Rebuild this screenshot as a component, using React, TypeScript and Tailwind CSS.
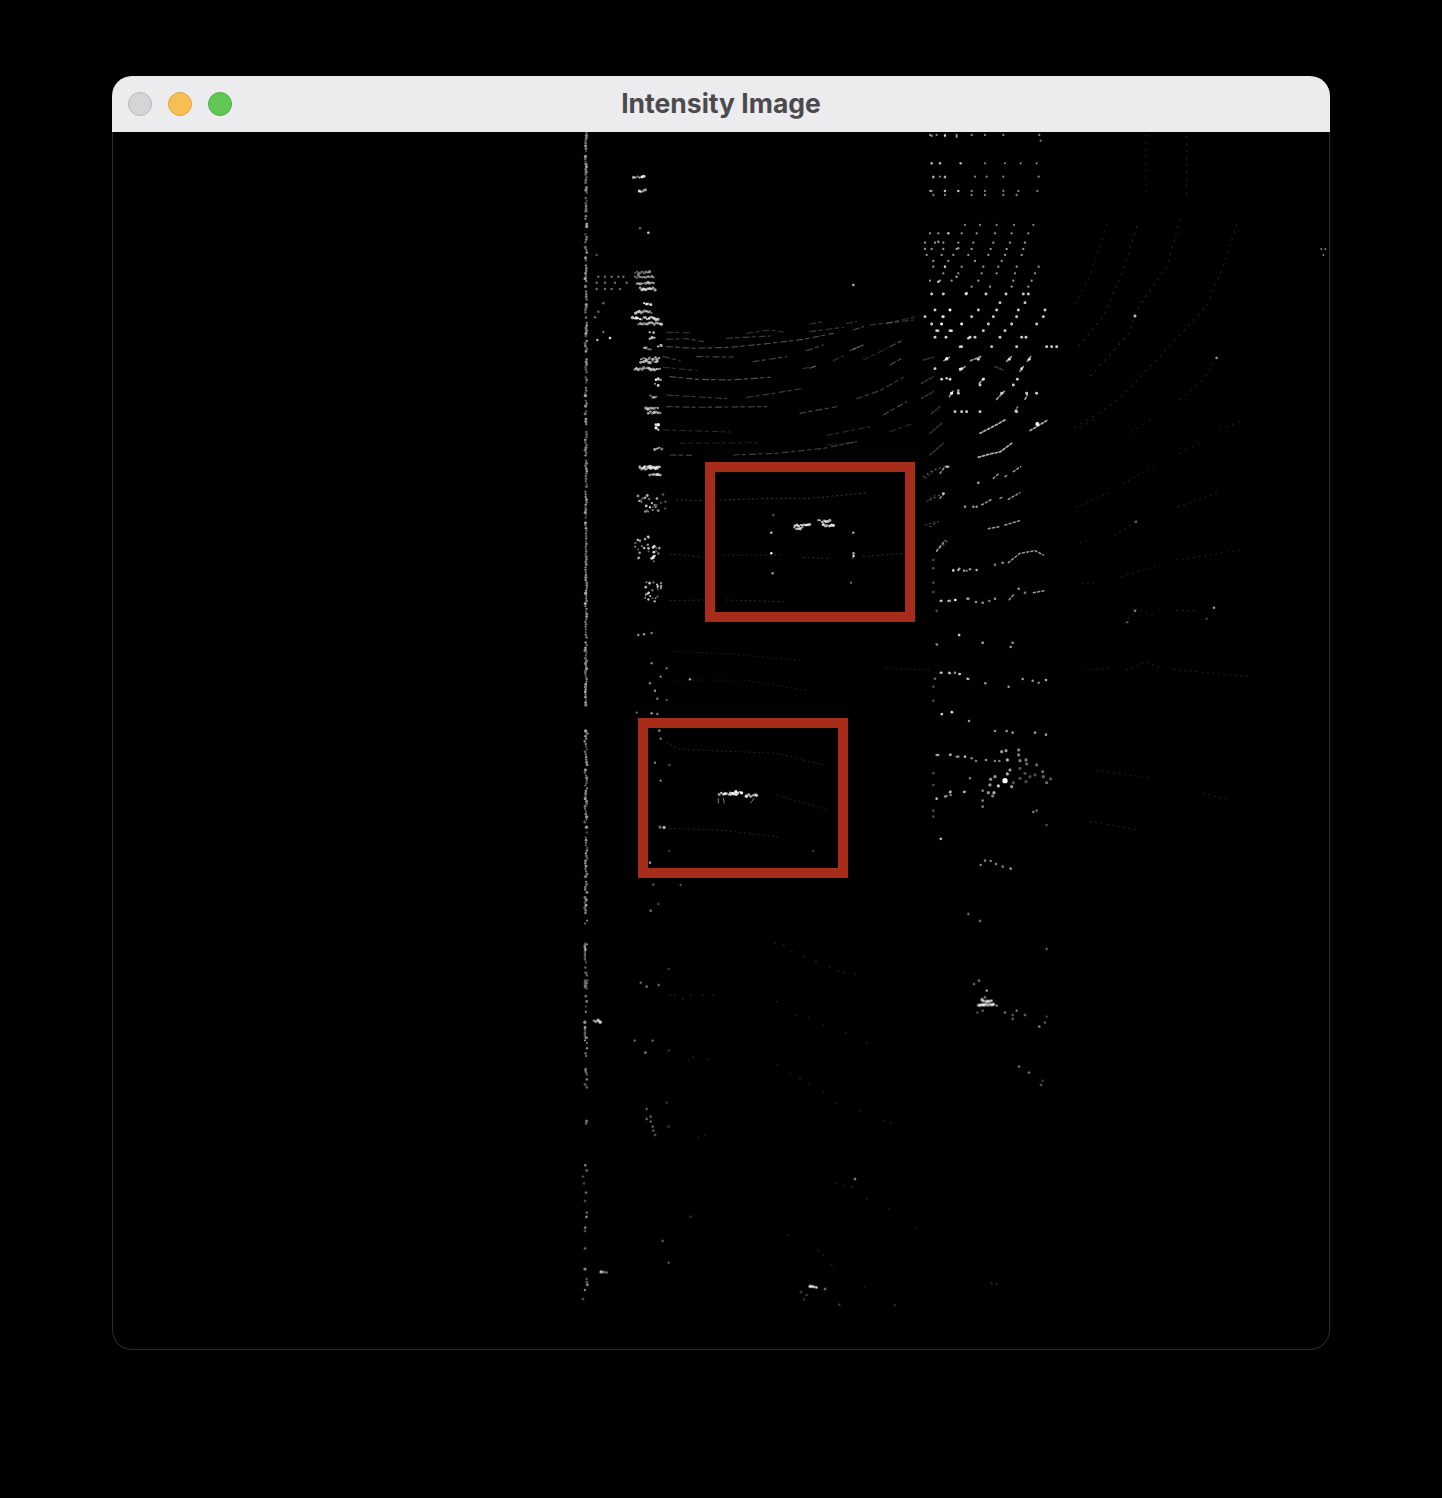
type Row = [number, number[]];
type Blob = [number, number, number, number];
type Arc = [number, string];

// seeded random so the point cloud stays the same between renders
const rand = (() => {
  let s = 1337;
  return () => {
    s = (s * 16807) % 2147483647;
    return s / 2147483647;
  };
})();

// the wall on the left, runs nearly the whole height
const wallDots: { x: number; y: number; r: number; o: number }[] = [];
for (let y = 133; y < 1300; y += 2.6) {
  const gap = (y > 706 && y < 730) || (y > 925 && y < 942);
  if (gap) continue;
  const keep = y < 450 ? 0.78 : y < 720 ? 0.95 : y < 925 ? 0.85 : y < 1085 ? 0.5 : 0.14;
  if (rand() > keep) continue;
  wallDots.push({
    x: 586 + (rand() - 0.5) * (y < 720 ? 1.6 : 2.6),
    y,
    r: 1 + rand() * 0.7,
    o: 0.3 + rand() * 0.35,
  });
}

// a blob of returns is a short row of bumpy dots, not a clean line
const speckle = (blobs: Blob[]) =>
  blobs.flatMap(([x, y, len, o]) =>
    Array.from({ length: Math.max(2, Math.round(len / 5)) }, (_, i) => ({
      x: x + (i * len) / Math.max(1, Math.round(len / 5) - 1) + (rand() - 0.5) * 2,
      y: y + (rand() - 0.5) * 7,
      r: 2.8 + rand() * 2.4,
      o: o * (0.6 + rand() * 0.4),
    })),
  );

// messy clump, for the trunks between the two boxes
const clump = (cx: number, cy: number, w: number, h: number, n: number) =>
  Array.from({ length: n }, () => ({
    x: cx + (rand() - 0.5) * w,
    y: cy + (rand() - 0.5) * h,
    r: 2.6 + rand() * 1.8,
    o: 0.3 + rand() * 0.55,
  }));

// zoom 2 region, units are 1/3 px from (570,130)
const topLeftBlobs: Blob[] = [
  [190, 141, 32, 0.95], [208, 183, 18, 0.95], [195, 428, 45, 0.55], [195, 440, 55, 0.6],
  [200, 458, 50, 0.7], [210, 477, 45, 0.85], [222, 521, 20, 1], [197, 546, 48, 0.75],
  [188, 565, 75, 0.95], [205, 581, 70, 0.8], [240, 605, 10, 1], [240, 626, 14, 1],
  [222, 656, 20, 0.7], [264, 648, 10, 0.9], [212, 685, 55, 0.75], [212, 695, 52, 0.75],
  [195, 716, 75, 0.8], [258, 750, 14, 1], [255, 763, 10, 1], [242, 800, 18, 0.8],
  [228, 835, 35, 0.75], [235, 848, 35, 0.75], [258, 885, 8, 1], [258, 897, 8, 1],
  [255, 955, 20, 0.75], [210, 1012, 60, 0.8],
];
const topLeftDots: [number, number, number][] = [
  [235, 308, 0.8], [210, 295, 0.4], [80, 375, 0.3], [85, 440, 0.4], [105, 440, 0.4], [125, 440, 0.4],
  [145, 440, 0.4], [160, 440, 0.4], [80, 458, 0.4], [105, 458, 0.4], [135, 458, 0.4], [170, 458, 0.4],
  [80, 477, 0.4], [105, 477, 0.4], [125, 477, 0.4], [150, 477, 0.4], [120, 624, 0.9], [82, 630, 0.7],
  [100, 520, 0.4], [85, 545, 0.4], [75, 562, 0.4], [100, 606, 0.4], [850, 465, 0.7], [1140, 540, 0.9],
  [1118, 560, 0.8], [1115, 582, 0.9], [1105, 602, 0.7], [1145, 602, 0.9], [1175, 582, 0.7],
  [1195, 625, 0.8], [1170, 650, 0.8], [1130, 685, 0.9], [1170, 717, 0.8], [1130, 745, 0.8],
  [1145, 790, 0.9], [1165, 782, 0.7], [1105, 455, 0.8], [1125, 410, 0.6], [1160, 440, 0.6],
  [1190, 490, 0.8], [1105, 335, 0.6], [1135, 310, 0.5], [1165, 355, 0.5], [1085, 100, 0.5],
  [1110, 100, 0.5], [1172, 100, 0.5], [1090, 142, 0.5], [1125, 142, 0.5], [1085, 183, 0.5],
  [1125, 183, 0.5], [1165, 183, 0.5], [1085, 17, 0.5], [1125, 17, 0.7], [1160, 20, 0.5],
];
const topArcs: Arc[] = [
  [0.2, "M290 607 L360 608 M530 610 L600 600 L640 606 M720 582 L760 576 M830 580 L860 575 M950 580 L1040 560"],
  [0.24, "M290 628 L350 626 L400 635 M470 625 L600 618 M720 605 L820 592 M900 585 L1030 570"],
  [0.3, "M290 650 L370 655 L480 652 L600 640 L700 628 L790 610 M850 600 L880 590"],
  [0.28, "M280 680 L330 692 M380 680 L490 681 M550 695 L650 680 M710 662 L760 645 M840 662 L880 645 M960 650 L1000 630"],
  [0.18, "M280 712 L380 722 M700 716 L735 708 M790 692 L820 678 M880 690 L950 655"],
  [0.32, "M300 740 L380 748 L480 750 L600 742 M720 715 L745 706 M850 658 L880 645 M960 705 L1000 682"],
  [0.24, "M290 795 L470 806 M530 802 L600 792 L700 775 M860 806 L930 782 L1000 742"],
  [0.28, "M290 830 L380 832 L590 830 M690 850 L800 830 M940 855 L1010 815"],
  [0.16, "M280 900 L480 906 M770 916 L900 890 M960 905 L1030 880"],
  [0.12, "M330 940 L560 938 M770 945 L860 936"],
  [0.26, "M300 975 L365 976 M490 975 L620 970 L760 955 L860 935"],
];

// zoom 3 region, units are 1/3 px from (920,130)
const gridRows: Row[] = [
  [15, [30, 50, 75, 110, 155, 195, 250, 358]],
  [32, [362]],
  [100, [35, 60, 122, 195, 255, 302, 350]],
  [140, [40, 60, 75, 165, 200, 250, 356]],
  [183, [30, 75, 115, 155, 195, 250, 295, 352]],
  [195, [40, 75, 155, 195, 250, 290]],
  [285, [135, 180, 230, 282, 340]],
  [310, [30, 55, 85, 125, 170, 225, 275, 325]],
  [338, [15, 45, 70, 115, 160, 220, 270, 315]],
  [357, [15, 35, 70, 110, 155, 212, 260, 310]],
  [375, [20, 65, 100, 145, 205, 255, 305]],
  [393, [40, 85, 165, 245]],
  [410, [40, 75, 125, 190, 235, 290, 356]],
  [430, [70, 115, 185, 230, 285, 345]],
  [452, [30, 60, 95, 175, 280, 335]],
  [470, [155, 210, 275, 325]],
  [492, [35, 70, 138, 198, 258, 310, 325]],
  [518, [240, 315]],
  [540, [45, 90, 175, 230, 295, 375]],
  [560, [15, 70, 155, 220, 290, 370]],
  [582, [35, 65, 125, 205, 275, 350]],
  [602, [50, 90, 190, 255]],
  [622, [45, 78, 150, 165, 240, 305, 318]],
  [650, [125, 215, 290, 380, 395, 410]],
  [688, [80, 175, 268, 328]],
  [716, [45, 125, 305]],
  [748, [65, 90, 190, 292]],
  [765, [180, 280]],
  [790, [95, 115, 245, 320, 350]],
  [845, [105, 125, 140, 180, 290]],
];
const gridStrokes: Arc[] = [
  [0.6, "M72 692 L88 682 M120 722 L135 710 M152 692 L182 680 M260 694 L274 680 M322 694 L332 680 M300 724 L310 710 M178 760 L195 742 M88 800 L100 782 M230 808 L255 782 M315 808 L322 795 M285 845 L292 832"],
  [0.7, "M175 982 L210 972 L240 966 L275 940 M330 902 L380 872 M180 910 L215 892 L255 870"],
  [0.2, "M10 690 L40 682 M225 710 L250 720 M5 760 L40 740 M5 805 L40 785 M35 850 L60 830 M30 910 L65 880 M30 975 L70 940"],
];
const faintLines: Arc[] = [
  [0.14, "M800 20 L800 195 M678 15 L678 185 M950 285 L905 420 L860 530 L770 625 L680 720 L610 795 L545 845 L450 900"],
  [0.16, "M780 270 L740 410 L650 540 L630 605 L560 685 L500 750 M650 290 L610 420 L550 560 L470 655"],
  [0.12, "M560 285 L510 440 L465 522 M890 680 L850 750 L780 810 M960 875 L900 898 M838 940 L770 975 M690 870 L630 910 M520 870 L470 900"],
];

// zoom 4 region, units are 1/3 px from (570,450)
const midBlobs: Blob[] = [
  [210, 55, 50, 0.85], [240, 75, 30, 0.8], [675, 225, 45, 1], [672, 235, 25, 0.85], [745, 213, 35, 0.9],
  [760, 225, 30, 0.9], [448, 1032, 55, 0.9], [480, 1027, 35, 1], [530, 1037, 30, 0.95], [270, 1131, 12, 0.7],
];
const midDots: [number, number, number][] = [
  [1130, 50, 0.8], [1120, 130, 0.7], [604, 248, 0.8], [604, 310, 1], [608, 370, 0.6], [850, 248, 0.7],
  [851, 318, 0.8], [850, 310, 0.6], [843, 398, 0.4], [610, 195, 0.35], [205, 555, 0.6], [222, 553, 0.6],
  [245, 549, 0.5], [245, 640, 0.5], [290, 655, 0.4], [272, 680, 0.5], [360, 688, 0.6], [240, 700, 0.5],
  [255, 722, 0.6], [262, 746, 0.5], [290, 750, 0.3], [200, 788, 0.4], [245, 790, 0.6], [262, 792, 0.5],
  [268, 842, 0.6], [272, 866, 0.5], [255, 938, 0.5], [298, 945, 0.3], [272, 992, 0.5], [240, 1238, 0.7],
  [1165, 360, 0.6], [1150, 360, 0.6], [1190, 362, 0.5], [1115, 452, 0.6], [1140, 452, 0.6], [1157, 450, 0.7],
  [1192, 446, 0.5], [1168, 555, 0.6], [1102, 585, 0.3], [1115, 668, 0.6], [1140, 670, 0.6], [1170, 672, 0.6],
  [1192, 686, 0.6], [1145, 786, 0.7], [1115, 793, 0.6], [1105, 915, 0.6], [1140, 915, 0.5], [1160, 920, 0.5],
  [1185, 920, 0.5], [1140, 1027, 0.6], [1130, 1038, 0.5], [1100, 1046, 0.5], [1185, 1025, 0.5], [1113, 1166, 0.5],
  [298, 1203, 0.25], [730, 1203, 0.2], [250, 1304, 0.4], [332, 1305, 0.3],
];
const midLines: Arc[] = [
  [0.2, "M320 150 L400 152 M450 150 L600 145 L720 145 L890 128"],
  [0.16, "M300 312 L390 320 M460 315 L630 315 M700 322 L780 326 M880 320 L1000 310"],
  [0.16, "M300 452 L400 450 M470 450 L640 455"],
  [0.1, "M310 604 L480 612 L700 632 M300 690 L520 690 L715 722 M950 655 L1085 660"],
  [0.13, "M290 878 L330 898 L620 910 L760 945 M300 1135 L450 1140 L630 1162 M620 1035 L770 1078"],
  [0.4, "M1060 80 L1090 60 L1130 48 M1080 150 L1120 130 M1080 230 L1105 215 M1100 305 L1135 270"],
];

// zoom 5 region, units are 1/3 px from (920,460)
const rightDots: [number, number, number][] = [
  [85, 20, 0.6], [175, 68, 0.7], [135, 140, 0.6], [160, 140, 0.6], [170, 140, 0.6], [100, 332, 0.6], [118, 326, 0.6],
  [132, 332, 0.6], [150, 328, 0.6], [170, 330, 0.7], [225, 314, 0.5], [248, 308, 0.6], [62, 423, 0.6], [85, 423, 0.6],
  [105, 420, 0.7], [145, 416, 0.6], [168, 426, 0.6], [188, 428, 0.6], [208, 423, 0.5], [225, 416, 0.6], [296, 386, 0.6],
  [315, 398, 0.5], [117, 525, 0.6], [50, 553, 0.4], [188, 548, 0.7], [278, 548, 0.6], [272, 561, 0.6], [40, 300, 0.3],
  [40, 325, 0.3], [40, 368, 0.3], [40, 396, 0.3], [50, 452, 0.3], [62, 638, 0.6], [87, 638, 0.6], [105, 638, 0.6],
  [118, 642, 0.6], [145, 657, 0.6], [196, 670, 0.6], [266, 680, 0.6], [308, 657, 0.6], [338, 662, 0.6], [356, 668, 0.5],
  [378, 660, 0.7], [45, 656, 0.4], [40, 680, 0.3], [40, 722, 0.3], [66, 762, 0.6], [96, 757, 0.7], [147, 783, 0.6],
  [225, 813, 0.6], [260, 813, 0.6], [278, 818, 0.6], [345, 818, 0.6], [378, 824, 0.6], [50, 885, 0.6], [92, 884, 0.5],
  [115, 890, 0.5], [135, 890, 0.5], [155, 895, 0.5], [168, 903, 0.5], [198, 900, 0.6], [225, 903, 0.5], [238, 903, 0.5],
  [62, 1137, 0.5], [182, 1215, 0.5], [195, 1202, 0.5], [212, 1203, 0.5], [228, 1212, 0.5], [248, 1220, 0.5], [272, 1226, 0.6],
  [150, 955, 0.5], [132, 996, 0.6], [92, 995, 0.5], [92, 1005, 0.5], [75, 1010, 0.5], [50, 1016, 0.5], [188, 992, 0.5],
  [188, 1022, 0.5], [188, 1040, 0.5], [340, 1056, 0.5], [350, 1052, 0.4], [380, 1095, 0.3], [40, 940, 0.3], [40, 975, 0.3],
  [40, 1052, 0.3], [40, 1070, 0.3], [648, 185, 0.4], [645, 452, 0.5], [882, 443, 0.6], [622, 487, 0.3], [860, 476, 0.25],
];
const rightCluster: [number, number, number][] = [
  [255, 962, 1], [235, 978, 0.8], [262, 942, 0.7], [270, 930, 0.6], [245, 875, 0.6], [258, 872, 0.6], [262, 900, 0.7],
  [296, 870, 0.5], [296, 885, 0.5], [300, 902, 0.5], [318, 900, 0.5], [320, 912, 0.4], [350, 915, 0.4], [212, 958, 0.6],
  [225, 950, 0.6], [210, 975, 0.6], [205, 998, 0.6], [222, 998, 0.7], [218, 1008, 0.5], [275, 980, 0.6], [300, 925, 0.3],
  [315, 940, 0.3], [330, 950, 0.3], [345, 945, 0.3], [368, 935, 0.4], [370, 950, 0.4], [392, 957, 0.35], [380, 968, 0.4],
  [300, 955, 0.3], [318, 965, 0.3], [280, 968, 0.3],
];
const rightLines: Arc[] = [
  [0.6, "M60 40 L75 20 M220 55 L235 42 M255 50 L262 45 M280 35 L302 20 M60 115 L75 98 M185 135 L215 118 M240 115 L250 110 M265 118 L300 98 M205 206 L240 200 M255 195 L300 182 M50 272 L75 242 M265 308 L300 280 L345 272 L370 285 M280 405 L265 422 M340 398 L375 392"],
  [0.16, "M15 55 L40 35 M20 125 L45 105 M15 195 L50 185"],
];
const rightFaint: Arc[] = [
  [0.12, "M610 70 L700 20 M470 140 L570 98 M775 140 L895 98 M585 225 L645 185 M480 248 L510 240 M605 350 L720 315 M770 300 L960 270 M485 372 L525 368 M615 490 L650 448 L700 465 M770 452 L830 452 M495 630 L570 625 M620 630 L680 605 L720 625 M760 628 L990 650 M530 930 L690 955 M850 1000 L930 1020 M510 1085 L660 1110"],
];

// zoom 6 region, units are 1/3 px from (570,900)
const lowDots: [number, number, number][] = [
  [1195, 42, 0.6], [1230, 63, 0.7], [1430, 147, 0.5], [1212, 252, 0.6], [1227, 242, 0.6], [1250, 272, 0.8], [1245, 292, 0.7],
  [1280, 317, 0.7], [1305, 338, 0.6], [1340, 332, 0.6], [1328, 345, 0.5], [1328, 357, 0.6], [1365, 345, 0.6], [1408, 380, 0.7],
  [1425, 368, 0.5], [1430, 350, 0.3], [1222, 338, 0.4], [1238, 332, 0.5], [1347, 500, 0.6], [1377, 518, 0.6], [1413, 555, 0.5],
  [1418, 542, 0.3], [242, 32, 0.6], [265, 12, 0.4], [212, 248, 0.5], [230, 260, 0.6], [266, 255, 0.6], [296, 207, 0.3],
  [194, 422, 0.5], [248, 422, 0.5], [226, 458, 0.7], [296, 452, 0.25], [230, 627, 0.5], [230, 657, 0.6], [242, 650, 0.5],
  [242, 665, 0.5], [248, 680, 0.5], [250, 692, 0.5], [255, 705, 0.5], [296, 680, 0.3], [290, 608, 0.25], [855, 837, 0.8],
  [278, 1023, 0.5], [296, 1088, 0.4], [362, 950, 0.25], [765, 1167, 0.7], [693, 1176, 0.4], [710, 1185, 0.35], [702, 1198, 0.3],
  [808, 1214, 0.3], [975, 1215, 0.25], [1265, 1150, 0.2], [1280, 1152, 0.2], [39, 1197, 0.5], [50, 1137, 0.5], [45, 1107, 0.5],
  [45, 1045, 0.6], [45, 993, 0.5], [50, 950, 0.5], [50, 938, 0.5], [45, 903, 0.5], [48, 878, 0.6], [42, 850, 0.4], [39, 830, 0.4],
];
const lowFaint: [number, number][] = [
  [615, 128], [640, 135], [665, 155], [700, 170], [738, 184], [780, 200], [805, 213], [822, 218], [855, 222], [620, 305],
  [680, 345], [718, 352], [760, 375], [828, 398], [890, 428], [622, 495], [660, 520], [690, 535], [718, 550], [760, 575],
  [800, 610], [870, 632], [940, 662], [962, 668], [300, 285], [315, 285], [338, 297], [362, 285], [398, 285], [428, 285],
  [355, 480], [368, 472], [415, 478], [385, 712], [405, 705], [800, 850], [820, 856], [845, 860], [890, 897], [955, 927],
  [1040, 985], [745, 1052], [760, 1065], [785, 1095], [885, 1160], [655, 1005],
];
const lowBlobs: Blob[] = [
  [1225, 312, 45, 1], [1235, 302, 30, 1], [72, 363, 18, 1], [94, 1115, 16, 0.95], [720, 1162, 20, 1],
];

const topSpeckle = speckle(topLeftBlobs);
const midSpeckle = [
  ...speckle(midBlobs),
  ...clump(245, 155, 85, 60, 26),
  ...clump(232, 300, 75, 80, 30),
  ...clump(250, 425, 50, 60, 24),
];
const lowSpeckle = speckle(lowBlobs);

function Specks({ items }: { items: { x: number; y: number; r: number; o: number }[] }) {
  return (
    <>
      {items.map((d, i) => (
        <circle key={i} cx={d.x} cy={d.y} r={d.r} fill="#fff" fillOpacity={d.o} />
      ))}
    </>
  );
}

function PointCloud() {
  return (
    <svg viewBox="113 132 1216 1217" className="block h-[1217px] w-[1216px]" fill="none">
      <defs>
        <filter id="soft" filterUnits="userSpaceOnUse" x="113" y="132" width="1216" height="1217">
          <feGaussianBlur stdDeviation="0.6" />
        </filter>
      </defs>

      <g filter="url(#soft)" strokeLinecap="round" strokeLinejoin="round">
        <Specks items={wallDots} />

        {/* upper left: trees + ground arcs */}
        <g transform="translate(570 130) scale(0.3333)">
          {topArcs.map(([o, d], i) => (
            <path key={i} d={d} stroke="#fff" strokeOpacity={o} strokeWidth="3.5" strokeDasharray="18 9 10 12" />
          ))}
          <Specks items={topSpeckle} />
          {topLeftDots.map(([x, y, o], i) => (
            <circle key={i} cx={x} cy={y} r="3.8" fill="#fff" fillOpacity={o} />
          ))}
        </g>

        {/* upper right: grid of returns */}
        <g transform="translate(920 130) scale(0.3333)">
          {gridRows.flatMap(([y, xs], i) =>
            xs.map((x, j) => (
              <circle
                key={`${i}-${j}`}
                cx={x}
                cy={y}
                r={y > 480 ? 4.4 : 3.4}
                fill="#fff"
                fillOpacity={y < 300 ? 0.5 : y < 480 ? 0.6 : 0.8}
              />
            )),
          )}
          {gridStrokes.map(([o, d], i) => (
            <path key={i} d={d} stroke="#fff" strokeOpacity={o} strokeWidth="5" strokeDasharray="7 6" />
          ))}
          {faintLines.map(([o, d], i) => (
            <path key={i} d={d} stroke="#fff" strokeOpacity={o} strokeWidth="3.5" strokeDasharray="3 18" />
          ))}
          <circle cx="352" cy="882" r="6" fill="#fff" />
          <circle cx="645" cy="558" r="4.5" fill="#fff" fillOpacity="0.75" />
          <circle cx="890" cy="684" r="4" fill="#fff" fillOpacity="0.55" />
          <circle cx="1204" cy="357" r="3" fill="#fff" fillOpacity="0.5" />
          <circle cx="1216" cy="357" r="3" fill="#fff" fillOpacity="0.5" />
          <circle cx="1210" cy="375" r="3" fill="#fff" fillOpacity="0.5" />
        </g>

        {/* middle: cars + side structures */}
        <g transform="translate(570 450) scale(0.3333)">
          {midLines.map(([o, d], i) => (
            <path key={i} d={d} stroke="#fff" strokeOpacity={o} strokeWidth="3.5" strokeDasharray="3 11" />
          ))}
          <Specks items={midSpeckle} />
          {midDots.map(([x, y, o], i) => (
            <circle key={i} cx={x} cy={y} r="3.6" fill="#fff" fillOpacity={o} />
          ))}
          <path d="M445 1045v14M460 1045l3 14M552 1045l-10 14M848 325l5-16" stroke="#fff" strokeOpacity="0.5" strokeWidth="3" />
        </g>

        {/* right of the road */}
        <g transform="translate(920 460) scale(0.3333)">
          {rightLines.map(([o, d], i) => (
            <path key={i} d={d} stroke="#fff" strokeOpacity={o} strokeWidth="4.5" strokeDasharray="6 7" />
          ))}
          {rightFaint.map(([o, d], i) => (
            <path key={i} d={d} stroke="#fff" strokeOpacity={o} strokeWidth="3.5" strokeDasharray="3 14" />
          ))}
          {rightDots.map(([x, y, o], i) => (
            <circle key={i} cx={x} cy={y} r="3.8" fill="#fff" fillOpacity={o} />
          ))}
          {rightCluster.map(([x, y, o], i) => (
            <circle key={i} cx={x} cy={y} r={o > 0.85 ? 8 : 4.8} fill="#fff" fillOpacity={o} />
          ))}
        </g>

        {/* bottom */}
        <g transform="translate(570 900) scale(0.3333)">
          {lowFaint.map(([x, y], i) => (
            <circle key={i} cx={x} cy={y} r="2.8" fill="#fff" fillOpacity="0.16" />
          ))}
          {lowDots.map(([x, y, o], i) => (
            <circle key={i} cx={x} cy={y} r="3.4" fill="#fff" fillOpacity={o} />
          ))}
          <Specks items={lowSpeckle} />
          <path d="M45 130v50M45 240v24M45 510l6 14M45 380v32" stroke="#fff" strokeOpacity="0.55" strokeWidth="5" strokeDasharray="10 5" />
        </g>
      </g>

      {/* detection boxes */}
      <rect x="710" y="467" width="200" height="150" stroke="#a72d1a" strokeWidth="10" />
      <rect x="643" y="723" width="200" height="150" stroke="#a72d1a" strokeWidth="10" />
    </svg>
  );
}

export default function App() {
  return (
    <div className="min-h-[1498px] bg-black pl-[112px] pt-[76px]">
      <div className="w-[1218px]">
        <div className="relative flex h-[56px] items-center justify-center rounded-t-[20px] bg-[#ececee]">
          <div className="absolute left-[16px] top-[16px] flex gap-4">
            <span className="h-6 w-6 rounded-full border border-[#b9b9bb] bg-[#d5d5d7]" />
            <span className="h-6 w-6 rounded-full border border-[#dfa63f] bg-[#f7bf52]" />
            <span className="h-6 w-6 rounded-full border border-[#52ae46] bg-[#62c655]" />
          </div>
          <span className="-mt-0.5 font-['Inter',sans-serif] text-[26.5px] font-bold leading-none text-[#4b4b4d]">
            Intensity Image
          </span>
        </div>
        <div className="overflow-hidden rounded-b-[20px] border border-t-0 border-[#2a2a2a] bg-black">
          <PointCloud />
        </div>
      </div>
    </div>
  );
}
